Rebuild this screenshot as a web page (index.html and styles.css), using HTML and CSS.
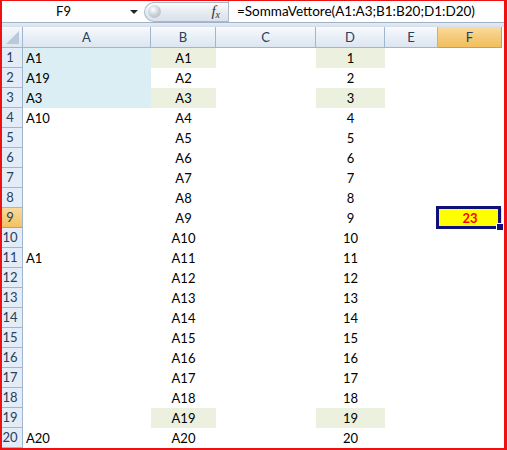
FILE: index.html
```html
<!DOCTYPE html>
<html lang="it">
<head>
    <meta charset="UTF-8">
    <meta name="viewport" content="width=device-width, initial-scale=1.0">
    <title>SommaVettore</title>
    <link rel="stylesheet" href="styles.css">
</head>
<body>
    <div class="window">
        <div class="formula-bar">
            <div class="name-box">F9</div>
            <div class="name-drop"></div>
            <div class="fx-button">
                <span class="fx-knob"></span>
                <span class="fx">f<span class="fx-x">x</span></span>
            </div>
            <div class="formula">=SommaVettore(A1:A3;B1:B20;D1:D20)</div>
        </div>
        <div class="bar-edge"></div>
        <div class="sheet" id="sheet">
            <div class="corner"></div>
            <div class="col-head">A</div>
            <div class="col-head">B</div>
            <div class="col-head">C</div>
            <div class="col-head">D</div>
            <div class="col-head">E</div>
            <div class="col-head active">F</div>
        </div>
    </div>

    <script>
    const colA = { 1: 'A1', 2: 'A19', 3: 'A3', 4: 'A10', 11: 'A1', 20: 'A20' };
    const greenRows = [1, 3, 19];
    const sheet = document.getElementById('sheet');

    function addCell(text, classes) {
        const div = document.createElement('div');
        div.className = classes;
        div.textContent = text;
        sheet.appendChild(div);
        return div;
    }

    for (let r = 1; r <= 20; r++) {
        const green = greenRows.includes(r) ? ' green' : '';
        addCell(r, 'row-head' + (r === 9 ? ' active' : ''));
        addCell(colA[r] || '', 'cell left' + (r <= 3 ? ' blue' : ''));
        addCell('A' + r, 'cell center' + green);
        addCell('', 'cell');
        addCell(r, 'cell center' + green);
        addCell('', 'cell');
        addCell(r === 9 ? '23' : '', 'cell center' + (r === 9 ? ' selected' : ''));
    }
    </script>
</body>
</html>
```

FILE: styles.css
```css
* {
    box-sizing: border-box;
    margin: 0;
    padding: 0;
}
html, body {
    width: 507px;
    height: 450px;
    overflow: hidden;
    background: #fff;
}
body {
    font-family: 'Lato', 'Liberation Sans', sans-serif;
    font-size: 13px;
    color: #000;
}
.window {
    width: 507px;
    height: 450px;
    border-style: solid;
    border-color: #ee1111;
    border-width: 1px 3px 2px 2px;
    overflow: hidden;
}

/* formula bar */
.formula-bar {
    height: 21px;
    display: flex;
    align-items: center;
    background: #fff;
}
.name-box {
    width: 123px;
    text-align: center;
    line-height: 21px;
}
.name-drop {
    width: 0;
    height: 0;
    margin-left: 5px;
    border-left: 4px solid transparent;
    border-right: 4px solid transparent;
    border-top: 4px solid #222;
}
.fx-button {
    margin-left: 6px;
    width: 84px;
    height: 20px;
    display: flex;
    align-items: center;
    justify-content: space-between;
    padding: 0 8px 0 3px;
    border: 1px solid #a9b9cc;
    border-right: none;
    border-radius: 10px 0 0 10px;
    background: linear-gradient(#fbfcfd, #e3e9f0 60%, #dbe2eb);
}
.fx-knob {
    width: 13px;
    height: 13px;
    border-radius: 50%;
    background: radial-gradient(circle at 40% 35%, #ffffff, #c4ccd6 55%, #b0b9c5);
}
.fx {
    font-family: 'Liberation Serif', serif;
    font-style: italic;
    font-size: 15px;
    color: #333;
}
.fx-x {
    font-size: 10px;
    vertical-align: -2px;
}
.formula {
    flex: 1;
    height: 21px;
    line-height: 21px;
    padding-left: 8px;
    border-left: 1px solid #a9b9cc;
    white-space: nowrap;
    font-size: 13.5px;
}
.bar-edge {
    height: 5px;
    border-top: 1px solid #9fb1c6;
    background: linear-gradient(#e6ecf3, #d6dfe9);
}

/* sheet */
.sheet {
    display: grid;
    grid-template-columns: 21px 128px 65px 100px 69px 53px 64px;
    grid-template-rows: 21px repeat(20, 20px);
    width: 500px;
}
.corner {
    position: relative;
    border-right: 1px solid #9eb6ce;
    border-bottom: 1px solid #9eb6ce;
    background: linear-gradient(#f4f7fb, #dde6f1);
}
.corner::after {
    content: '';
    position: absolute;
    right: 3px;
    bottom: 3px;
    width: 0;
    height: 0;
    border-left: 13px solid transparent;
    border-bottom: 13px solid #b9c9dc;
}
.col-head {
    text-align: center;
    line-height: 20px;
    color: #27405c;
    border-right: 1px solid #9eb6ce;
    border-bottom: 1px solid #9eb6ce;
    background: linear-gradient(#f8fafd, #e9eff7 50%, #dce5f0);
}
.col-head.active {
    background: linear-gradient(#f9dba2, #f5cb79 50%, #f1bf5e);
    border-color: #c2a060;
}
.row-head {
    text-align: center;
    padding-right: 4px;
    line-height: 19px;
    color: #27405c;
    background: #e4ecf7;
    border-right: 1px solid #9eb6ce;
    border-bottom: 1px solid #9eb6ce;
}
.row-head.active {
    background: linear-gradient(#f9d99c, #f2c261);
    border-bottom-color: #c2a060;
}
.cell {
    line-height: 20px;
    white-space: nowrap;
}
.cell.left {
    padding-left: 3px;
}
.cell.center {
    text-align: center;
}
.cell.blue {
    background: #dbeef3;
}
.cell.green {
    background: #ebf1de;
}
.cell.selected {
    position: relative;
    background: #ffff00;
    color: #ff0000;
    font-weight: bold;
}
/* active cell outline and fill handle */
.cell.selected::before {
    content: '';
    position: absolute;
    left: -2px;
    top: -2px;
    right: 1px;
    bottom: -1px;
    border: 3px solid #10107a;
}
.cell.selected::after {
    content: '';
    position: absolute;
    right: -2px;
    bottom: -3px;
    width: 6px;
    height: 6px;
    background: #10107a;
    border: 1px solid #fff;
}
```
